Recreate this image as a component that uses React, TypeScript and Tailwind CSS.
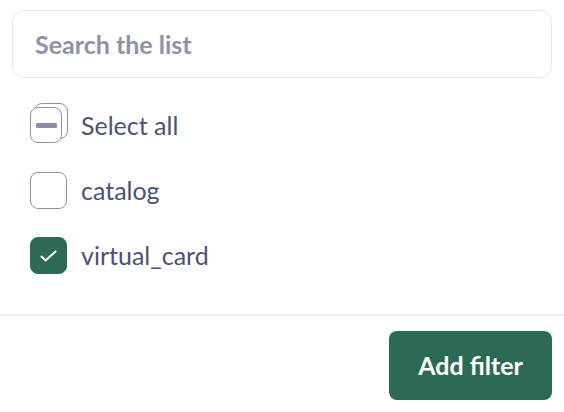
import React, { useState } from 'react';

type Item = { id: string; label: string };

const ITEMS: Item[] = [
    { id: 'catalog', label: 'catalog' },
    { id: 'virtual_card', label: 'virtual_card' },
];

const CheckIcon = () => (
    <svg className="h-[12px] w-[17px] text-white" fill="none" viewBox="0 0 17 12" stroke="currentColor">
        <path strokeLinecap="round" strokeLinejoin="round" strokeWidth={2} d="M1.5 6.5l4 4L15.5 1.5" />
    </svg>
);

const Box: React.FC<{ checked: boolean }> = ({ checked }) => (
    <span
        className={`flex h-[37px] w-[37px] items-center justify-center rounded-lg border ${
            checked ? 'border-[#2d6a56] bg-[#2d6a56]' : 'border-[#8c93a6] bg-white'
        }`}
    >
        {checked && <CheckIcon />}
    </span>
);

// partially selected: two stacked boxes with a dash on the front one
const StackedBox = () => (
    <span className="relative block h-[37px] w-[37px]">
        <span className="absolute left-[4px] top-[-4px] h-[36px] w-[34px] rounded-lg border border-[#8c93a6] bg-white" />
        <span className="absolute left-0 top-0 flex h-[36px] w-[32px] items-center justify-center rounded-lg border border-[#8c93a6] bg-white">
            <span className="h-[5px] w-[21px] rounded-[1px] bg-[#8a8fa3]" />
        </span>
    </span>
);

export default function App() {
    const [query, setQuery] = useState('');
    const [selected, setSelected] = useState<Record<string, boolean>>({ virtual_card: true });

    const toggle = (id: string) => setSelected((s) => ({ ...s, [id]: !s[id] }));

    return (
        <div className="flex h-[412px] w-[564px] flex-col bg-white font-['Lato',sans-serif]">
            <div className="px-3 pt-[10px]">
                <input
                    value={query}
                    onChange={(e) => setQuery(e.target.value)}
                    placeholder="Search the list"
                    className="h-[68px] w-[540px] rounded-xl border border-[#e6e8ec] px-[22px] text-[25px] font-bold text-[#4c5273] outline-none placeholder:text-[#8d92a6]"
                />
            </div>

            <ul className="flex flex-col gap-[28px] px-[30px] pt-[29px]">
                <li className="flex h-[37px] cursor-pointer items-center gap-[14px]">
                    <StackedBox />
                    <span className="text-[25px] text-[#4c5273]">Select all</span>
                </li>
                {ITEMS.map((item) => (
                    <li key={item.id} onClick={() => toggle(item.id)} className="flex h-[37px] cursor-pointer items-center gap-[14px]">
                        <Box checked={!!selected[item.id]} />
                        <span className="text-[25px] text-[#4c5273]">{item.label}</span>
                    </li>
                ))}
            </ul>

            <div className="mt-auto border-t-2 border-[#ededed] px-3 pb-[12px] pt-[15px]">
                <div className="flex justify-end">
                    <button className="h-[69px] w-[163px] rounded-lg bg-[#2d6a56] text-[25px] font-bold text-white">Add filter</button>
                </div>
            </div>
        </div>
    );
}
